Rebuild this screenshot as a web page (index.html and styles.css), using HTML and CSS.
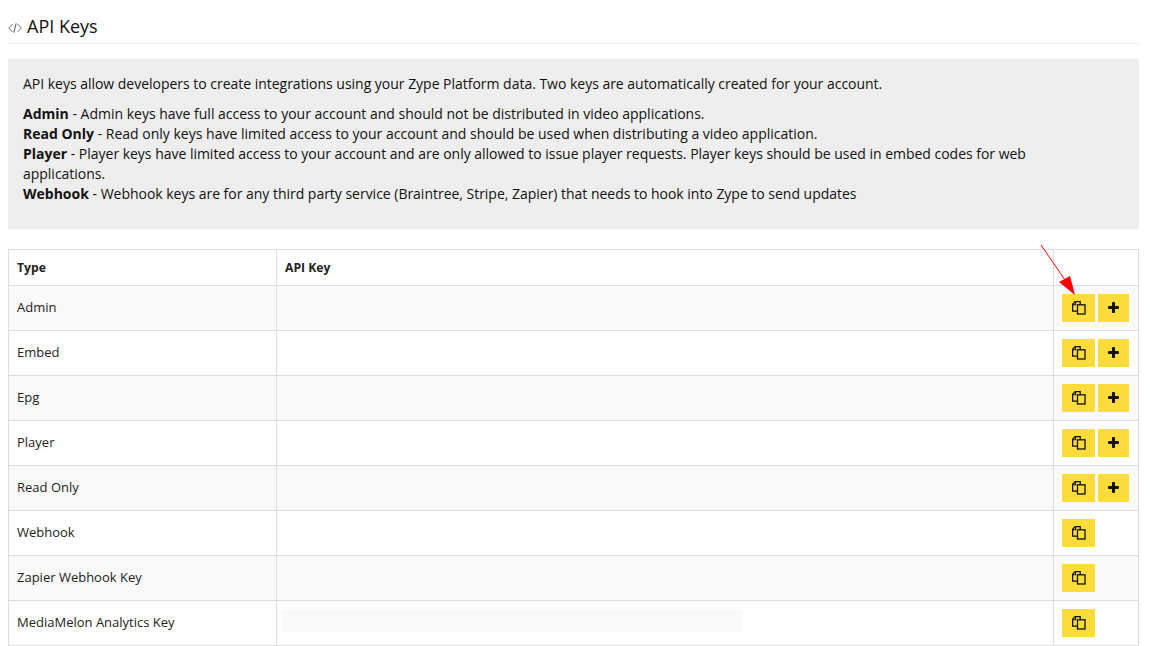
FILE: index.html
```html
<!DOCTYPE html>
<html lang="en">
<head>
<meta charset="utf-8">
<title>API Keys</title>
<link rel="stylesheet" href="styles.css">
</head>
<body>
<svg width="0" height="0" class="defs">
  <symbol id="copy" viewBox="0 0 14 14">
    <path d="M5.300 10.200H.6V3.200L3.200.6H8.200V3.800" fill="none" stroke="#111" stroke-width="1.300"/>
    <path d="M.8 3.700H3.600V.8" fill="none" stroke="#111" stroke-width="1.100"/>
    <rect x="5.500" y="3.800" width="7.500" height="9.200" fill="none" stroke="#111" stroke-width="1.300"/>
  </symbol>
  <symbol id="plus" viewBox="0 0 11 11">
    <path d="M5.500 1.200v8.600M1.200 5.500h8.600" fill="none" stroke="#111" stroke-width="3" stroke-linecap="round"/>
  </symbol>
</svg>
<main class="page">
  <h1 class="title">
    <svg class="code-icon" width="14" height="10" viewBox="0 0 14 10"><path d="M4.500 1 .8 5l3.700 4M9.500 1 13.200 5 9.500 9" fill="none" stroke="#777" stroke-width="1"/><path d="M8.200 .3 5.800 9.700" fill="none" stroke="#555" stroke-width="1"/></svg>
    API Keys
  </h1>
  <section class="info">
    <p class="intro">API keys allow developers to create integrations using your Zype Platform data. Two keys are automatically created for your account.</p>
    <p class="types"><b>Admin</b> - Admin keys have full access to your account and should not be distributed in video applications.<br>
    <b>Read Only</b> - Read only keys have limited access to your account and should be used when distributing a video application.<br>
    <b>Player</b> <span class="tight">- Player keys have limited access to your account and are only allowed to issue player requests. Player keys should be used in embed codes for web applications.</span><br>
    <b>Webhook</b> <span class="tight">- Webhook keys are for any third party service (Braintree, Stripe, Zapier) that needs to hook into Zype to send updates</span></p>
  </section>
  <div class="table-wrap">
    <table class="keys">
      <colgroup><col class="c1"><col class="c2"><col class="c3"></colgroup>
      <thead><tr><th>Type</th><th>API Key</th><th></th></tr></thead>
      <tbody>
        <tr><td class="type">Admin</td><td></td><td><div class="btns"><button class="btn copy"><svg><use href="#copy"/></svg></button><button class="btn add"><svg><use href="#plus"/></svg></button></div></td></tr>
        <tr><td class="type">Embed</td><td></td><td><div class="btns"><button class="btn copy"><svg><use href="#copy"/></svg></button><button class="btn add"><svg><use href="#plus"/></svg></button></div></td></tr>
        <tr><td class="type">Epg</td><td></td><td><div class="btns"><button class="btn copy"><svg><use href="#copy"/></svg></button><button class="btn add"><svg><use href="#plus"/></svg></button></div></td></tr>
        <tr><td class="type">Player</td><td></td><td><div class="btns"><button class="btn copy"><svg><use href="#copy"/></svg></button><button class="btn add"><svg><use href="#plus"/></svg></button></div></td></tr>
        <tr><td class="type">Read Only</td><td></td><td><div class="btns"><button class="btn copy"><svg><use href="#copy"/></svg></button><button class="btn add"><svg><use href="#plus"/></svg></button></div></td></tr>
        <tr><td class="type">Webhook</td><td></td><td><div class="btns"><button class="btn copy"><svg><use href="#copy"/></svg></button></div></td></tr>
        <tr><td class="type">Zapier Webhook Key</td><td></td><td><div class="btns"><button class="btn copy"><svg><use href="#copy"/></svg></button></div></td></tr>
        <tr><td class="type">MediaMelon Analytics Key</td><td class="key-cell"><div class="masked"></div></td><td><div class="btns"><button class="btn copy"><svg><use href="#copy"/></svg></button></div></td></tr>
      </tbody>
    </table>
    <svg class="arrow" width="50" height="60" viewBox="0 0 50 60"><path d="M1 0 25 35" stroke="#f00" stroke-width="1" fill="none"/><path d="M19 37 30 31 35 50Z" fill="#f00"/></svg>
  </div>
</main>
</body>
</html>
```
FILE: styles.css
```css
* { box-sizing: border-box; }
html, body { margin: 0; padding: 0; background: #fff; }
body { font-family: "Open Sans", sans-serif; font-size: 14px; line-height: 20px; color: #111; height: 646px; overflow: hidden; }
.defs { position: absolute; }
.page { padding: 0 11px 0 8px; }
.title { margin: 0; height: 44px; padding: 13px 0 5px; font-size: 18px; line-height: 26px; font-weight: 400; border-bottom: 1px solid #eee; display: flex; align-items: center; gap: 5px; }
.code-icon { flex: none; margin-top: 4px; }
.info { margin-top: 15px; height: 170px; background: #eee; padding: 15px; }
.info p { margin: 0; }
.intro { margin-bottom: 10px !important; letter-spacing: -0.02px; }
.types { padding-right: 30px; }
.tight { letter-spacing: -0.02px; }
.table-wrap { position: relative; margin-top: 20px; }
.keys { width: 100%; table-layout: fixed; border-collapse: collapse; font-size: 13px; color: #222; }
.c1 { width: 268px; }
.c3 { width: 85px; }
.keys th, .keys td { border: 1px solid #ddd; padding: 0 8px; text-align: left; }
.keys th { height: 36px; font-weight: 700; font-size: 12.200px; }
.keys td { height: 45px; }
.keys .type { padding-bottom: 2px; }
.keys tbody tr:nth-child(odd) { background: #f9f9f9; }
.keys tbody tr:nth-child(even) { background: #fff; }
.keys .key-cell { padding: 0 4px 4px; }
.masked { width: 462px; height: 22px; background: #f9f9f9; }
.btns { display: flex; gap: 3px; }
.btn { height: 28px; padding: 0; border: 0; background: #fbdc3a; display: flex; align-items: center; justify-content: center; }
.btn.copy { width: 33px; }
.btn.add { width: 31px; }
.copy svg { width: 14px; height: 14px; }
.add svg { width: 11px; height: 11px; margin-bottom: 2px; }
.arrow { position: absolute; left: 1032px; top: -4px; }
```
